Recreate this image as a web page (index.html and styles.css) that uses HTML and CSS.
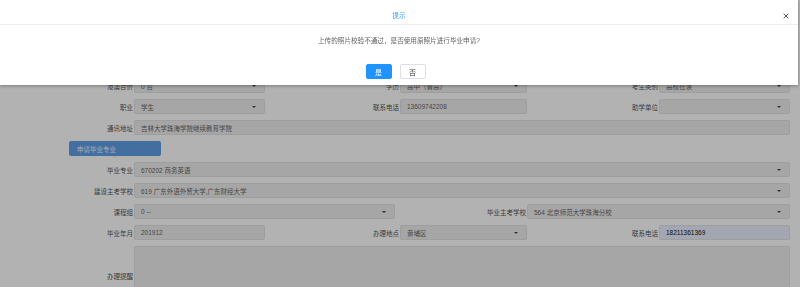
FILE: index.html
```html
<!DOCTYPE html>
<html>
<head>
    <link rel="stylesheet" href="styles.css">
</head>
<body>
<div id="page">
    <div class="row cols3">
        <div class="label">港澳台侨</div>
        <div class="field select">0 否<span class="caret"></span></div>
        <div class="label">学历</div>
        <div class="field select">高中（普高）<span class="caret"></span></div>
        <div class="label">考生类别</div>
        <div class="field select">高校在读<span class="caret"></span></div>
    </div>
    <div class="row cols3">
        <div class="label">职业</div>
        <div class="field select">学生<span class="caret"></span></div>
        <div class="label">联系电话</div>
        <div class="field">13609742208</div>
        <div class="label">助学单位</div>
        <div class="field select"><span class="caret"></span></div>
    </div>
    <div class="row wide">
        <div class="label">通讯地址</div>
        <div class="field">吉林大学珠海学院继续教育学院</div>
    </div>
    <div class="row tabrow">
        <div class="tab">申请毕业专业<span class="pointer"></span></div>
    </div>
    <div class="row wide">
        <div class="label">毕业专业</div>
        <div class="field select">670202 商务英语<span class="caret"></span></div>
    </div>
    <div class="row wide">
        <div class="label">建设主考学校</div>
        <div class="field select">619 广东外语外贸大学,广东财经大学<span class="caret"></span></div>
    </div>
    <div class="row cols2">
        <div class="label">课程组</div>
        <div class="field select">0 --<span class="caret"></span></div>
        <div class="label">毕业主考学校</div>
        <div class="field select">564 北京师范大学珠海分校<span class="caret"></span></div>
    </div>
    <div class="row cols3">
        <div class="label">毕业年月</div>
        <div class="field">201912</div>
        <div class="label">办理地点</div>
        <div class="field select">黄埔区<span class="caret"></span></div>
        <div class="label">联系电话</div>
        <div class="field filled">18211361369</div>
    </div>
    <div class="row wide tall">
        <div class="label">办理提醒</div>
        <div class="field area"></div>
    </div>
</div>

<div class="mask"></div>

<div class="dialog">
    <div class="dialog-head">
        <span class="dialog-title">提示</span>
        <svg class="close" width="6" height="6" viewBox="0 0 6 6">
            <path d="M0.7 0.7 L5.3 5.3 M5.3 0.7 L0.7 5.3" stroke="#444" stroke-width="0.9"/>
        </svg>
    </div>
    <div class="dialog-body">上传的照片校验不通过，是否使用原照片进行毕业申请?</div>
    <div class="dialog-foot">
        <span class="btn primary">是</span>
        <span class="btn">否</span>
    </div>
</div>
</body>
</html>
```

FILE: styles.css
```css
* {
    box-sizing: border-box;
}

body {
    margin: 0;
    background: #ffffff;
    font-family: "Liberation Sans", "Noto Sans CJK SC", sans-serif;
    font-size: 6.5px;
    color: #555;
}

#page {
    padding: 78px 10px 0 0;
}

.row {
    display: grid;
    height: 15px;
    margin-bottom: 6px;
}

.cols3 {
    grid-template-columns: 134px 131px 135px 127px 132px 131px;
}

.cols2 {
    grid-template-columns: 134px 261px 132px 263px;
}

.wide {
    grid-template-columns: 134px 656px;
}

.tall {
    height: 60px;
}

.label {
    display: flex;
    align-items: center;
    justify-content: flex-end;
    padding-right: 1px;
    color: #555;
    white-space: nowrap;
}

.field {
    position: relative;
    display: flex;
    align-items: center;
    padding-left: 6px;
    background: #eeeeee;
    border: 1px solid #e2e2e2;
    border-radius: 2px;
    color: #666;
    white-space: nowrap;
}

.field.filled {
    background: #e8f0fe;
    color: #111;
}

.caret {
    position: absolute;
    right: 8px;
    top: 6px;
    border-left: 2px solid transparent;
    border-right: 2px solid transparent;
    border-top: 2px solid #444;
}

.tabrow {
    display: block;
}

.tab {
    position: relative;
    display: flex;
    align-items: center;
    width: 92px;
    height: 15px;
    margin-left: 69px;
    padding-left: 8px;
    background: #5f9fe6;
    border-radius: 2px;
    color: #f4f8ff;
}

.pointer {
    position: absolute;
    left: 43px;
    bottom: -3px;
    border-left: 3px solid transparent;
    border-right: 3px solid transparent;
    border-top: 3px solid #f4f4f4;
}

.mask {
    position: fixed;
    inset: 0;
    background: rgba(0, 0, 0, 0.3);
}

.dialog {
    position: fixed;
    top: 0;
    left: 0;
    right: 2px;
    height: 85px;
    background: #ffffff;
    box-shadow: 0 1px 3px rgba(0, 0, 0, 0.3);
}

.dialog-head {
    position: relative;
    height: 25px;
    border-bottom: 1px solid #ececec;
    display: flex;
    align-items: center;
    justify-content: center;
    padding-top: 5px;
}

.dialog-title {
    color: #409eff;
    font-size: 6.7px;
}

.close {
    position: absolute;
    right: 9px;
    top: 13px;
}

.dialog-body {
    text-align: center;
    padding-top: 10px;
    height: 39px;
    color: #606266;
    font-size: 6.6px;
}

.dialog-foot {
    display: flex;
    justify-content: center;
    gap: 8px;
    padding-right: 7px;
}

.btn {
    display: flex;
    align-items: center;
    justify-content: center;
    width: 26px;
    height: 15px;
    border: 1px solid #dcdfe6;
    border-radius: 2px;
    color: #333;
    font-size: 7px;
}

.btn.primary {
    background: #1f93ff;
    border-color: #1f93ff;
    color: #ffffff;
}
```
